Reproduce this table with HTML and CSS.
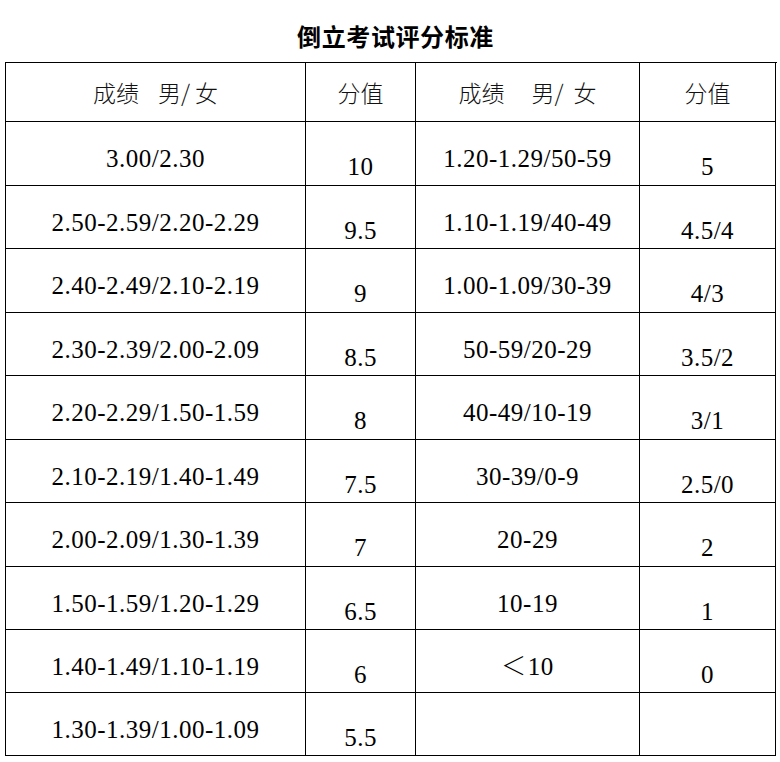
FILE: index.html
```html
<!DOCTYPE html>
<html lang="zh-CN">
<head>
<meta charset="utf-8">
<title>倒立考试评分标准</title>
<link rel="stylesheet" href="styles.css">
</head>
<body>
<div class="page">
  <h1 class="title">倒立考试评分标准</h1>
  <div class="sheet">
    <div class="cell head"><span>成绩</span><span class="gap gap-a"></span><span>男/ 女</span></div>
    <div class="cell head"><span>分值</span></div>
    <div class="cell head"><span>成绩</span><span class="gap gap-b"></span><span>男/&nbsp; 女</span></div>
    <div class="cell head"><span>分值</span></div>

    <div class="cell txt"><span class="num">3.00/2.30</span></div>
    <div class="cell val"><span class="num">10</span></div>
    <div class="cell txt"><span class="num">1.20-1.29/50-59</span></div>
    <div class="cell val"><span class="num">5</span></div>

    <div class="cell txt"><span class="num">2.50-2.59/2.20-2.29</span></div>
    <div class="cell val"><span class="num">9.5</span></div>
    <div class="cell txt"><span class="num">1.10-1.19/40-49</span></div>
    <div class="cell val"><span class="num">4.5/4</span></div>

    <div class="cell txt"><span class="num">2.40-2.49/2.10-2.19</span></div>
    <div class="cell val"><span class="num">9</span></div>
    <div class="cell txt"><span class="num">1.00-1.09/30-39</span></div>
    <div class="cell val"><span class="num">4/3</span></div>

    <div class="cell txt"><span class="num">2.30-2.39/2.00-2.09</span></div>
    <div class="cell val"><span class="num">8.5</span></div>
    <div class="cell txt"><span class="num">50-59/20-29</span></div>
    <div class="cell val"><span class="num">3.5/2</span></div>

    <div class="cell txt"><span class="num">2.20-2.29/1.50-1.59</span></div>
    <div class="cell val"><span class="num">8</span></div>
    <div class="cell txt"><span class="num">40-49/10-19</span></div>
    <div class="cell val"><span class="num">3/1</span></div>

    <div class="cell txt"><span class="num">2.10-2.19/1.40-1.49</span></div>
    <div class="cell val"><span class="num">7.5</span></div>
    <div class="cell txt"><span class="num">30-39/0-9</span></div>
    <div class="cell val"><span class="num">2.5/0</span></div>

    <div class="cell txt"><span class="num">2.00-2.09/1.30-1.39</span></div>
    <div class="cell val"><span class="num">7</span></div>
    <div class="cell txt"><span class="num">20-29</span></div>
    <div class="cell val"><span class="num">2</span></div>

    <div class="cell txt"><span class="num">1.50-1.59/1.20-1.29</span></div>
    <div class="cell val"><span class="num">6.5</span></div>
    <div class="cell txt"><span class="num">10-19</span></div>
    <div class="cell val"><span class="num">1</span></div>

    <div class="cell txt"><span class="num">1.40-1.49/1.10-1.19</span></div>
    <div class="cell val"><span class="num">6</span></div>
    <div class="cell txt"><span class="num"><span class="lt">＜</span>10</span></div>
    <div class="cell val"><span class="num">0</span></div>

    <div class="cell txt"><span class="num">1.30-1.39/1.00-1.09</span></div>
    <div class="cell val"><span class="num">5.5</span></div>
    <div class="cell txt"></div>
    <div class="cell val"></div>
  </div>
</div>
</body>
</html>
```

FILE: styles.css
```css
html, body {
  margin: 0;
  padding: 0;
  background: #ffffff;
}

.page {
  width: 780px;
  color: #000000;
}

.title {
  margin: 0 0 14px 0;
  padding: 24px 0 0 11px;
  height: 24px;
  font-family: "Noto Sans CJK SC", sans-serif;
  font-size: 24px;
  line-height: 24px;
  font-weight: 700;
  letter-spacing: 0.6px;
  text-align: center;
}

.sheet {
  margin-left: 5px;
  width: 771px;
  display: grid;
  grid-template-columns: 300px 110px 224px 136px;
  grid-template-rows: 59px 64px 63px 64px 63px 64px 63px 64px 63px 63px 63px;
  border-left: 1px solid #000;
  border-top: 1px solid #000;
}

.cell {
  box-sizing: border-box;
  border-right: 1px solid #000;
  border-bottom: 1px solid #000;
  text-align: center;
}

.head {
  display: flex;
  align-items: center;
  justify-content: center;
  font-family: "Noto Sans CJK SC", sans-serif;
  font-weight: 300;
  font-size: 23px;
  line-height: 23px;
  color: #111;
}

.gap {
  display: inline-block;
}

.gap-a {
  width: 19px;
}

.gap-b {
  width: 27px;
}

.txt {
  padding-top: 23px;
}

.val {
  padding-top: 31px;
}

.num {
  display: inline-block;
  font-family: "Liberation Serif", "Noto Sans CJK SC", serif;
  font-size: 25px;
  line-height: 28px;
  letter-spacing: 0.5px;
  white-space: nowrap;
}

.lt {
  font-weight: 300;
  margin-right: 1px;
}
```
